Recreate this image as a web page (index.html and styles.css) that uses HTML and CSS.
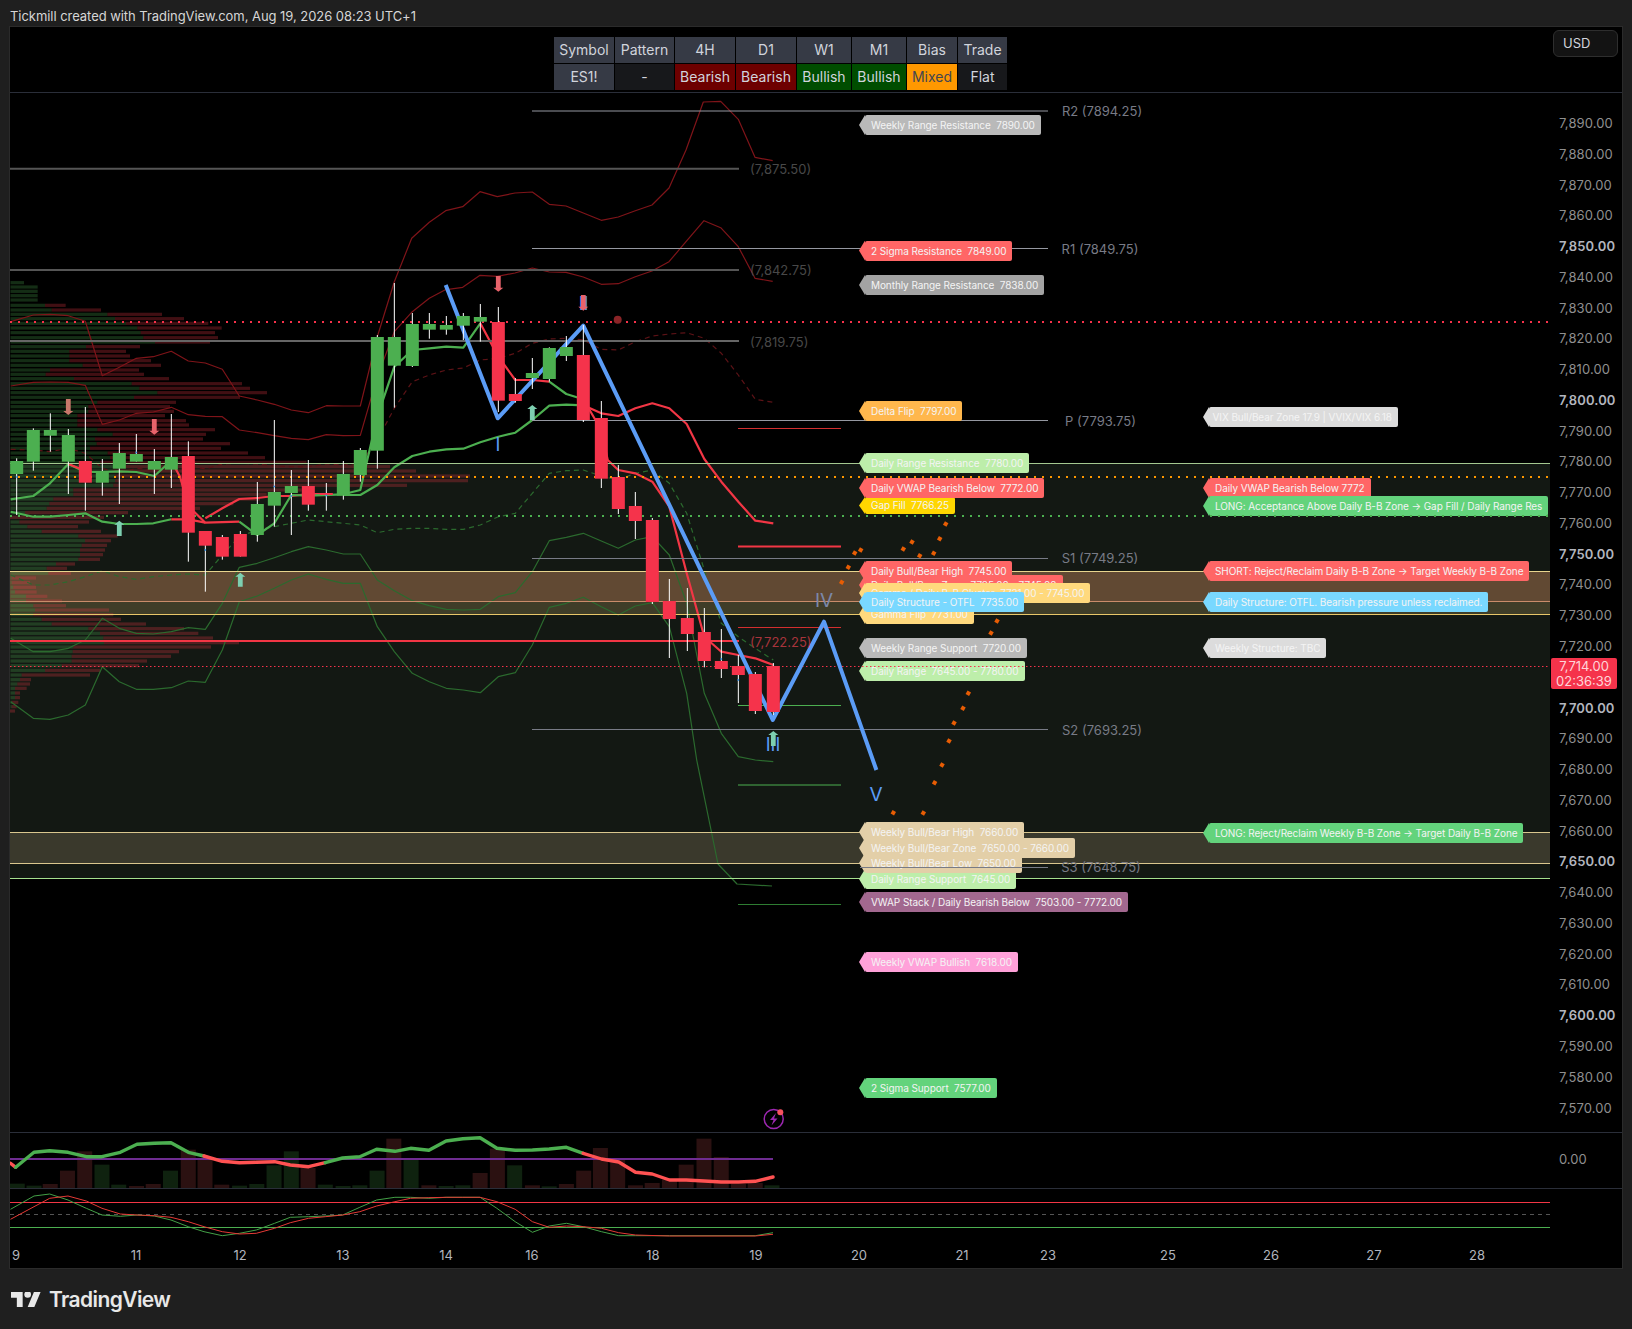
FILE: index.html
```html
<!DOCTYPE html>
<html lang="en">
<head>
    <meta charset="UTF-8">
    <title>ES1! chart</title>
    <link rel="stylesheet" href="styles.css">
</head>
<body>

    <header class="top_line">Tickmill created with TradingView.com, Aug 19, 2026 08:23 UTC+1</header>

    <main class="chart">
        <div class="table_pane">
            <div class="status_table">
                <div class="cell head">Symbol</div>
                <div class="cell head">Pattern</div>
                <div class="cell head">4H</div>
                <div class="cell head">D1</div>
                <div class="cell head">W1</div>
                <div class="cell head">M1</div>
                <div class="cell head">Bias</div>
                <div class="cell head">Trade</div>
                <div class="cell head">ES1!</div>
                <div class="cell flat">-</div>
                <div class="cell bear">Bearish</div>
                <div class="cell bear">Bearish</div>
                <div class="cell bull">Bullish</div>
                <div class="cell bull">Bullish</div>
                <div class="cell mixed">Mixed</div>
                <div class="cell flat">Flat</div>
            </div>
            <div class="currency">USD</div>
        </div>
        <div class="main_pane">
            <ul class="price_axis">
                <li>7,890.00</li><li>7,880.00</li><li>7,870.00</li><li>7,860.00</li>
                <li class="major">7,850.00</li><li>7,840.00</li><li>7,830.00</li><li>7,820.00</li>
                <li>7,810.00</li><li class="major">7,800.00</li><li>7,790.00</li><li>7,780.00</li>
                <li>7,770.00</li><li>7,760.00</li><li class="major">7,750.00</li><li>7,740.00</li>
                <li>7,730.00</li><li>7,720.00</li><li class="hidden">7,710.00</li><li class="major">7,700.00</li>
                <li>7,690.00</li><li>7,680.00</li><li>7,670.00</li><li>7,660.00</li>
                <li class="major">7,650.00</li><li>7,640.00</li><li>7,630.00</li><li>7,620.00</li>
                <li>7,610.00</li><li class="major">7,600.00</li><li>7,590.00</li><li>7,580.00</li>
                <li>7,570.00</li>
            </ul>
        </div>
        <div class="osc_pane"><span class="osc_zero">0.00</span></div>
        <div class="stoch_pane"></div>
        <div class="time_pane"></div>

        <svg class="plot" id="plot" viewBox="10 27 1612 1241">
            <g id="plot_under"></g>

            <text class="pivot_text" x="1102" y="111">R2 (7894.25)</text>
            <text class="pivot_text" x="1100" y="249">R1 (7849.75)</text>
            <text class="pivot_text" x="1100.5" y="421">P (7793.75)</text>
            <text class="pivot_text" x="1100" y="558">S1 (7749.25)</text>
            <text class="pivot_text" x="1102" y="730">S2 (7693.25)</text>

            <text class="level_text" x="750" y="169">(7,875.50)</text>
            <text class="level_text" x="750" y="270">(7,842.75)</text>
            <text class="level_text" x="750" y="342">(7,819.75)</text>
            <text class="level_text red" x="750" y="642">(7,722.25)</text>

            <text class="wave_text" x="498" y="444">I</text>
            <text class="wave_text" x="583.5" y="303">II</text>
            <text class="wave_text" x="773" y="744">III</text>
            <text class="wave_text dim big" x="824" y="600">IV</text>
            <text class="wave_text big" x="876" y="794">V</text>

            <text class="time_text" x="16" y="1255">9</text>
            <text class="time_text" x="136" y="1255">11</text>
            <text class="time_text" x="240" y="1255">12</text>
            <text class="time_text" x="343" y="1255">13</text>
            <text class="time_text" x="446" y="1255">14</text>
            <text class="time_text" x="532" y="1255">16</text>
            <text class="time_text" x="653" y="1255">18</text>
            <text class="time_text" x="756" y="1255">19</text>
            <text class="time_text" x="859" y="1255">20</text>
            <text class="time_text" x="962" y="1255">21</text>
            <text class="time_text" x="1048" y="1255">23</text>
            <text class="time_text" x="1168" y="1255">25</text>
            <text class="time_text" x="1271" y="1255">26</text>
            <text class="time_text" x="1374" y="1255">27</text>
            <text class="time_text" x="1477" y="1255">28</text>

            <circle class="bolt_ring" cx="773.7" cy="1119" r="9.5"></circle>
            <path class="bolt" d="M776 1113l-6 7h3.5l-2 5.5 6-7h-3.5z"></path>
            <circle class="bolt_dot" cx="780.3" cy="1112.3" r="3"></circle>
        </svg>

        <div class="tag mid grey" style="top:88px">Weekly Range Resistance&nbsp; 7890.00</div>
        <div class="tag mid red" style="top:213.5px">2 Sigma Resistance&nbsp; 7849.00</div>
        <div class="tag mid dark_grey" style="top:248px">Monthly Range Resistance&nbsp; 7838.00</div>
        <div class="tag mid orange" style="top:374px">Delta Flip&nbsp; 7797.00</div>
        <div class="tag mid light_green" style="top:426px">Daily Range Resistance&nbsp; 7780.00</div>
        <div class="tag mid yellow short" style="top:470px">Gap Fill&nbsp; 7766.25</div>
        <div class="tag mid red" style="top:451px">Daily VWAP Bearish Below&nbsp; 7772.00</div>
        <div class="tag mid red" style="top:548px">Daily Bull/Bear Zone&nbsp; 7735.00 - 7745.00</div>
        <div class="tag mid red" style="top:534px">Daily Bull/Bear High&nbsp; 7745.00</div>
        <div class="tag mid sand" style="top:577px">Gamma Flip&nbsp; 7731.00</div>
        <div class="tag mid sand" style="top:556px">Gamma / Daily B-B Cluster&nbsp; 7731.00 - 7745.00</div>
        <div class="tag mid sky" style="top:565px">Daily Structure - OTFL&nbsp; 7735.00</div>
        <div class="tag mid grey" style="top:611px">Weekly Range Support&nbsp; 7720.00</div>
        <div class="tag mid light_green" style="top:634px">Daily Range&nbsp; 7645.00 - 7780.00</div>
        <div class="tag mid light_green" style="top:842px">Daily Range Support&nbsp; 7645.00</div>
        <div class="tag mid beige" style="top:826px">Weekly Bull/Bear Low&nbsp; 7650.00</div>
        <div class="tag mid beige" style="top:795px">Weekly Bull/Bear High&nbsp; 7660.00</div>
        <div class="tag mid beige" style="top:811px">Weekly Bull/Bear Zone&nbsp; 7650.00 - 7660.00</div>
        <div class="tag mid plum" style="top:865px">VWAP Stack / Daily Bearish Below&nbsp; 7503.00 - 7772.00</div>
        <div class="tag mid pink" style="top:925px">Weekly VWAP Bullish&nbsp; 7618.00</div>
        <div class="tag mid green" style="top:1051px">2 Sigma Support&nbsp; 7577.00</div>

        <div class="tag side pale tight" style="top:380px">VIX Bull/Bear Zone 17.9 | VVIX/VIX 6.18</div>
        <div class="tag side red" style="top:451px">Daily VWAP Bearish Below 7772</div>
        <div class="tag side green" style="top:469px">LONG: Acceptance Above Daily B-B Zone → Gap Fill / Daily Range Res</div>
        <div class="tag side red" style="top:534px">SHORT: Reject/Reclaim Daily B-B Zone → Target Weekly B-B Zone</div>
        <div class="tag side sky" style="top:565px">Daily Structure: OTFL. Bearish pressure unless reclaimed.</div>
        <div class="tag side pale" style="top:611px">Weekly Structure: TBC</div>
        <div class="tag side green" style="top:796px">LONG: Reject/Reclaim Weekly B-B Zone → Target Daily B-B Zone</div>

        <svg class="plot" viewBox="10 27 1612 1241">
            <g id="plot_over"></g>
        </svg>

        <div class="last_price">7,714.00<br>02:36:39</div>
    </main>

    <footer class="brand">
        <svg class="brand_icon" viewBox="0 4 36 18">
            <path d="M14 22H7V11H0V4h14v18zM28 22h-8l7.5-18h8L28 22z"></path>
            <circle cx="20" cy="7" r="4"></circle>
        </svg>
        <span class="brand_name">TradingView</span>
    </footer>

    <script src="script.js"></script>
</body>
</html>
```

FILE: styles.css
```css
* {
    margin: 0;
    padding: 0;
    box-sizing: border-box;
}
body {
    width: 1632px;
    height: 1329px;
    overflow: hidden;
    background-color: #1f1f1f;
    font-family: Inter, "Noto Sans", sans-serif;
    color: #d1d4dc;
}
.top_line {
    height: 27px;
    padding: 8px 0 0 10px;
    font-size: 13px;
    line-height: 16px;
    letter-spacing: -0.05px;
    color: #d6d6d6;
}
.chart {
    position: relative;
    display: flex;
    flex-direction: column;
    width: 1612px;
    height: 1241px;
    margin-left: 10px;
    background-color: #000;
    outline: 1px solid #2b2b2b;
}
.table_pane {
    position: relative;
    height: 66px;
    padding: 10px 0 0 544px;
    border-bottom: 1px solid #2a2e39;
}
.status_table {
    display: grid;
    grid-template-columns: 60px 59px 60px 60px 54px 54px 50px 49px;
    grid-auto-rows: 26px;
    gap: 1px;
    width: max-content;
    font-size: 14px;
}
.cell {
    display: flex;
    align-items: center;
    justify-content: center;
    padding-bottom: 2px;
}
.head {
    background-color: #363a45;
}
.flat {
    background-color: #17181b;
}
.bear {
    background-color: #6d0000;
}
.bull {
    background-color: #004d00;
}
.mixed {
    background-color: #ff9800;
    color: #434651;
}
.currency {
    position: absolute;
    top: 3px;
    right: 4px;
    width: 65px;
    height: 27px;
    padding-left: 9px;
    border: 1px solid #2e2e2e;
    border-radius: 6px;
    background-color: #131313;
    font-size: 13px;
    line-height: 25px;
}
.main_pane {
    position: relative;
    flex: 1;
    border-bottom: 1px solid #2a2e39;
}
.price_axis {
    position: absolute;
    top: 15px;
    left: 1549px;
    list-style: none;
    font-size: 13px;
    color: #8f8f8f;
    letter-spacing: 0.1px;
}
.price_axis li {
    height: 30.78px;
    line-height: 30.78px;
}
.price_axis .major {
    font-weight: 600;
    color: #b2b5be;
}
.price_axis .hidden {
    visibility: hidden;
}
.osc_pane {
    position: relative;
    height: 56px;
    border-bottom: 1px solid #2a2e39;
}
.osc_zero {
    position: absolute;
    top: 18px;
    left: 1549px;
    font-size: 13px;
    color: #8f8f8f;
}
.stoch_pane {
    height: 51px;
}
.time_pane {
    height: 28px;
}

.plot {
    position: absolute;
    top: 0;
    left: 0;
    width: 1612px;
    height: 1241px;
    pointer-events: none;
}
.pivot_text,
.level_text {
    font-size: 13px;
    dominant-baseline: central;
}
.pivot_text {
    text-anchor: middle;
    fill: #787b86;
}
.level_text {
    fill: #484848;
}
.level_text.red {
    fill: #a8343c;
}
.wave_text {
    font-size: 18px;
    fill: #5b9cf6;
    text-anchor: middle;
    dominant-baseline: central;
}
.wave_text.big {
    font-size: 19px;
}
.wave_text.dim {
    fill: #7c88a8;
}
.time_text {
    font-size: 13px;
    fill: #b2b5be;
    text-anchor: middle;
    dominant-baseline: central;
}
.bolt_ring {
    fill: none;
    stroke: #9c27b0;
    stroke-width: 1.5;
}
.bolt {
    fill: #9c27b0;
}
.bolt_dot {
    fill: #f7525f;
}

.tag {
    position: absolute;
    height: 20px;
    padding: 0 6px;
    border-radius: 2px;
    font-size: 10px;
    line-height: 20px;
    letter-spacing: -0.08px;
    white-space: nowrap;
    color: #f4f4f4;
}
.tag::before {
    content: "";
    position: absolute;
    top: 0;
    left: -6px;
    width: 6px;
    height: 100%;
    background-color: inherit;
    clip-path: polygon(100% 0, 0 50%, 100% 100%);
}
.tag.short {
    height: 17px;
    line-height: 17px;
}
.tag.tight {
    padding-left: 3.5px;
}
.mid {
    left: 855px;
}
.side {
    left: 1199px;
}
.grey {
    background-color: #b9b9b9;
}
.dark_grey {
    background-color: #a3a3a3;
}
.pale {
    background-color: #dcdcdc;
}
.red {
    background-color: #ff6666;
}
.orange {
    background-color: #ffb74d;
}
.yellow {
    background-color: #ffd600;
}
.sand {
    background-color: #ffd97d;
}
.sky {
    background-color: #79d8ff;
}
.light_green {
    background-color: #bdeeaa;
}
.green {
    background-color: #63d37c;
}
.beige {
    background-color: #e3cfa8;
}
.plum {
    background-color: #a2688f;
}
.pink {
    background-color: #ffa1d9;
}
.last_price {
    position: absolute;
    top: 631px;
    left: 1541px;
    width: 66px;
    height: 31px;
    padding-top: 1px;
    border-radius: 2px;
    background-color: #f5334b;
    color: #ffd5d9;
    font-size: 13px;
    line-height: 14.5px;
    text-align: center;
}

.brand {
    display: flex;
    align-items: center;
    gap: 8px;
    height: 61px;
    padding: 2px 0 0 11px;
}
.brand_icon {
    width: 30px;
    height: 15px;
    fill: #e8e8e8;
}
.brand_name {
    font-size: 21px;
    font-weight: 600;
    letter-spacing: -0.6px;
    color: #e8e8e8;
}

/* chart parts drawn by script.js */
.line {
    fill: none;
    stroke-linejoin: round;
}
.thin_red { stroke: #7f1419; stroke-width: 1.2; }
.thin_green { stroke: #2b6a2e; stroke-width: 1.2; }
.dash_red { stroke: #5c1216; stroke-width: 1.2; stroke-dasharray: 5 4; }
.dash_green { stroke: #2b6a2e; stroke-width: 1.2; stroke-dasharray: 5 4; }
.fat_green { stroke: #4caf50; stroke-width: 2.2; }
.fat_red { stroke: #f23645; stroke-width: 2.2; }
.wave { stroke: #5b9cf6; stroke-width: 4; }
.macd_green { stroke: #4caf50; stroke-width: 3.4; stroke-linecap: round; }
.macd_red { stroke: #ff5252; stroke-width: 3.4; stroke-linecap: round; }
.stoch_green { stroke: #43a047; stroke-width: 1; }
.stoch_red { stroke: #e53935; stroke-width: 1; }
.wick { fill: #fff; }
.up { fill: #4caf50; }
.down { fill: #f5334b; }
.arrow_up { fill: #7dcfb0; }
.arrow_down { fill: #e8636b; }
.arrow_dim { fill: #c8776a; }
.tick { fill: #2f8fe8; }
.dot { fill: #e85d04; }
.circle_mark { fill: #8a2427; }
```

FILE: script.js
```js
// chart is drawn in page pixels, the viewBox of the svg maps them
const under = document.getElementById("plot_under");
const over = document.getElementById("plot_over");
let html = "";
let topHtml = "";

const z3 = (p) => p.map((q) => [q[0] / 3, 260 + q[1] / 3]);
const z4 = (p) => p.map((q) => [500 + q[0] / 3, 260 + q[1] / 3]);
const z11 = (p) => p.map((q) => [380 + q[0] / 3, 90 + q[1] / 3]);
const z8 = (p) => p.map((q) => [q[0] / 1.912, 1120 + q[1] / 3]);

function rect(x, y, w, h, fill, cls) {
    const c = cls ? ` class="${cls}"` : "";
    const f = fill ? ` fill="${fill}"` : "";
    return `<rect x="${x}" y="${y}" width="${w}" height="${h}"${f}${c}></rect>`;
}
function poly(points, cls) {
    const d = points.map((p) => p[0].toFixed(1) + "," + p[1].toFixed(1)).join(" ");
    return `<polyline class="line ${cls}" points="${d}"></polyline>`;
}
function hline(x1, x2, y, color, w, dash) {
    const da = dash ? ` stroke-dasharray="${dash}"` : "";
    return `<line x1="${x1}" x2="${x2}" y1="${y}" y2="${y}" stroke="${color}" stroke-width="${w}"${da}></line>`;
}

// zones
html += rect(10, 463, 1540, 416, "#131813");
html += rect(10, 571, 1540, 30.5, "#614933");
html += rect(10, 601.5, 1540, 12.5, "#3f3d28");
html += rect(10, 832.5, 1540, 31, "#3a392c");

// volume profile: zoomed y, green end, total end
const profile = [[68,72,72],[81,113,113],[94,113,113],[107,113,113],[120,113,113],[136,135,197],[150,155,303],[163,322,486],[176,345,552],[190,378,625],[204,412,665],[218,422,645],[233,430,654],[246,465,630],[260,258,420],[274,208,378],[288,208,390],[302,208,453],[316,248,483],[330,150,417],[343,137,432],[356,222,507],[371,395,726],[385,418,750],[398,472,801],[412,402,720],[427,292,528],[440,265,510],[454,265,522],[467,232,495],[482,232,558],[495,232,567],[509,292,645],[523,338,618],[537,285,609],[551,290,690],[565,270,663],[579,323,744],[593,330,795],[607,300,920],[620,340,1170],[633,340,1248],[648,345,1410],[662,345,1404],[676,340,1221],[690,220,905],[703,220,800],[717,160,780],[731,148,700],[745,140,600],[758,75,384],[772,30,312],[786,58,267],[800,82,234],[814,125,303],[828,235,353],[842,255,333],[856,245,321],[870,240,315],[884,240,309],[898,235,300],[912,168,225],[925,140,201],[940,145,213],[954,35,108],[968,35,90],[982,40,108],[996,45,110],[1009,78,142],[1023,78,186],[1037,100,198],[1050,105,327],[1064,100,340],[1078,125,363],[1092,155,438],[1106,265,552],[1120,300,595],[1134,310,639],[1148,312,717],[1161,220,633],[1175,218,537],[1189,215,513],[1203,215,441],[1217,185,417],[1231,135,300],[1245,65,270],[1259,60,93],[1272,52,90],[1285,45,80],[1299,45,60],[1313,45,60],[1327,35,55],[1340,35,50],[1353,30,45]];
for (const r of profile) {
    const y = 260 + r[0] / 3 - 1.6;
    const g = r[1] / 3 - 10.5;
    const t = r[2] / 3 - 10.5;
    html += rect(10.5, y, g, 3.2, "rgba(76,175,80,.26)");
    if (t > g) html += rect(10.5 + g, y, t - g, 3.2, "rgba(242,54,69,.27)");
}

// bands
const bandA = z3([[32,185],[100,165],[150,163],[205,167],[256,184],[307,347],[358,322],[409,295],[460,290],[514,274],[565,303],[616,309],[667,328],[718,408],[772,420],[823,433],[874,450],[925,458],[979,437],[1030,438],[1081,438],[1132,230],[1183,65]])
    .concat(z11([[95,445],[148,397],[197,362],[248,350],[300,305],[352,320],[405,309],[457,306],[508,343],[558,348],[610,369],[664,391],[715,381],[766,362],[816,345],[867,294],[918,180],[970,36],[1022,34],[1075,88],[1125,202],[1178,212]]));
const bandB = z3([[32,378],[100,367],[150,366],[205,367],[256,376],[307,493],[358,480],[409,460],[460,456],[514,442],[565,464],[616,469],[667,470],[718,510],[772,518],[823,527],[874,535],[925,539],[979,524],[1030,527],[1081,526],[1132,350],[1183,215],[1237,155],[1288,115],[1339,88]])
    .concat(z11([[205,598],[248,592],[300,556],[352,559],[405,549],[457,534],[508,546],[558,547],[610,561],[664,583],[715,581],[766,560],[816,543],[867,515],[918,455],[972,392],[1022,413],[1075,470],[1125,565],[1178,574]]));
const dashRed = z3([[32,568],[100,570],[150,575],[205,565],[256,580],[307,625],[358,640],[409,625],[460,630],[514,625],[565,617],[616,627],[667,612],[718,610],[772,612],[823,618],[874,620],[925,620],[979,612],[1030,615],[1081,610],[1132,540],[1183,445],[1237,365],[1288,345],[1339,330],[1390,324],[1441,300],[1495,295],[1546,280]])
    .concat(z4([[97,250],[148,237],[199,235],[250,240],[304,268],[355,270],[406,245],[457,228],[508,222],[560,218],[613,235],[664,280],[715,345],[766,418],[820,427]]));
const dashGreen = z3([[32,945],[100,975],[150,975],[205,965],[256,950],[307,932],[358,950],[409,958],[460,950],[514,945],[565,942],[616,945],[667,885],[718,830],[772,810],[823,800],[874,790],[925,780],[979,785],[1030,790],[1081,795],[1132,818],[1183,808],[1237,805],[1288,805],[1339,808],[1390,808],[1441,795],[1495,770],[1546,760]])
    .concat(z4([[97,700],[148,640],[199,632],[250,630],[304,648],[355,660],[406,640],[457,630],[508,670],[560,760],[613,930],[664,1090],[715,1130],[766,1165],[820,1200]]));
const green1 = z3([[32,1135],[100,1175],[150,1175],[205,1165],[256,1140],[307,1075],[358,1105],[409,1120],[460,1122],[514,1115],[565,1103],[616,1108],[667,1030],[718,922],[772,910],[823,893],[874,875],[925,860],[979,870],[1030,882],[1081,882],[1132,960],[1183,992],[1237,1022],[1288,1037],[1339,1048],[1390,1050],[1441,1048],[1495,1010],[1546,998]])
    .concat(z4([[97,935],[148,842],[199,832],[250,820],[304,843],[355,865],[406,840],[457,830],[508,885],[560,1030],[613,1300],[664,1420],[715,1490],[766,1500],[820,1505]]));
const green2 = z3([[32,1325],[100,1375],[150,1378],[205,1365],[256,1335],[307,1220],[358,1265],[409,1288],[460,1288],[514,1283],[565,1263],[616,1267],[667,1170],[718,1025],[772,1008],[823,985],[874,960],[925,942],[979,958],[1030,970],[1081,970],[1132,1100],[1183,1175],[1237,1240],[1288,1265],[1339,1285],[1390,1290],[1441,1298],[1495,1250],[1546,1238]])
    .concat(z4([[97,1155],[148,1042],[199,1030],[250,1012],[304,1040],[355,1065],[406,1038],[457,1028],[508,1100],[560,1300],[590,1500]]), [[718,864],[737,884],[772,886]]);
html += poly(bandA, "thin_red") + poly(bandB, "thin_red");
html += poly(dashRed, "dash_red") + poly(dashGreen, "dash_green");
html += poly(green1, "thin_green") + poly(green2, "thin_green");

// vwap lines
html += poly(z3([[32,718],[100,708],[150,670],[205,612],[256,636],[307,636],[358,634],[409,636],[463,648],[514,602]]), "fat_green");
html += poly(z3([[205,612],[256,632]]), "fat_red");
html += poly(z3([[514,602],[540,650],[565,738],[616,788],[718,785]]), "fat_red");
html += poly(z3([[616,775],[667,745],[718,717],[772,714],[823,708],[874,708],[925,702],[979,702]]), "fat_red");
html += poly(z3([[718,785],[772,825],[823,790],[874,705],[925,707],[1030,703],[1081,690],[1132,470],[1183,320],[1237,270],[1288,265],[1339,260],[1390,263],[1441,190]]), "fat_green");
html += poly(z3([[32,755],[100,770],[150,770],[205,765],[256,760],[307,785],[358,792],[409,792],[460,790],[514,778]]), "fat_green");
html += poly(z3([[514,778],[565,778],[616,788]]), "fat_red");
html += poly(z3([[1030,705],[1081,705],[1132,675],[1183,622],[1237,588],[1288,575],[1339,568],[1390,566],[1441,547],[1495,530],[1546,518]]).concat(z4([[97,480],[148,437],[199,434],[250,436]])), "fat_green");
html += poly(z4([[250,436],[304,460],[355,468],[406,445],[457,430],[508,445],[560,492],[613,597],[664,665],[715,725],[766,782],[820,790]]), "fat_red");
html += poly(z3([[1441,190],[1495,290],[1546,360]]).concat(z4([[97,360],[148,365]])), "fat_red");
html += poly(z4([[148,365],[199,402],[250,418]]), "fat_green");
html += poly(z4([[250,418],[304,510],[323,600],[355,630],[406,640],[457,665],[508,740],[560,940],[613,1130],[664,1175],[715,1185],[766,1195],[820,1215]]), "fat_red");

// level lines
html += hline(10, 739, 168.7, "#555", 2);
html += hline(10, 739, 270, "#555", 2);
html += hline(10, 739, 341, "#666", 2);
html += hline(10, 739, 641, "#f23645", 2);
html += hline(532, 1048, 111, "#9598a1", 1);
html += hline(532, 1048, 248.5, "#9598a1", 1);
html += hline(532, 1048, 420.5, "#9598a1", 1);
html += hline(532, 1048, 558.5, "#787b86", 1);
html += hline(532, 1048, 729.5, "#787b86", 1);
html += hline(738, 841, 428.5, "#d32f2f", 1);
html += hline(738, 841, 546.5, "#f23645", 2);
html += hline(738, 841, 627.5, "#d32f2f", 1);
html += hline(738, 841, 705.5, "#4caf50", 1);
html += hline(738, 841, 785, "#4caf50", 1);
html += hline(738, 841, 904.5, "#2e7d32", 1);
html += hline(10, 1550, 463.5, "#a5c890", 1);
html += hline(10, 1550, 571.5, "#e8d58e", 1);
html += hline(10, 1550, 601.5, "#c98c6a", 1);
html += hline(10, 1550, 614.5, "#e8c76a", 1);
html += hline(10, 1550, 832.5, "#d9c68e", 1);
html += hline(10, 1550, 863.5, "#d9c68e", 1);
html += hline(10, 1550, 878.5, "#a5e08f", 1);
html += hline(10, 1550, 322, "#f7324a", 2, "2 6");
html += hline(10, 858, 477, "#ff9800", 2, "2 6");
html += hline(10, 858, 516, "#4caf50", 2, "2 6");
html += hline(10, 858, 666.5, "#f5334b", 1, "1.5 2.5");

// wave
html += poly(z3([[1337,75],[1493,475]]).concat(z4([[250,197],[818,1380],[972,1085]]), [[876.4,770]]), "wave");

// candles: x, body top, body bottom, wick top, wick bottom (zoom px)
const candles3 = [[50,603,642,595,765,1],[100,510,605,505,632,1],[151,510,527,460,575,1],[205,525,605,507,702,1],[256,603,668,441,752,0],[307,633,668,597,707,1],[358,579,626,549,732,1],[409,582,605,522,605,1],[463,603,629,567,702,1],[514,591,629,462,684,1],[565,588,818,544,905,0],[616,813,857,813,995,0],[667,831,890,825,899,0],[721,822,890,813,890,0],[772,732,825,666,845,1],[823,696,737,480,800,1],[874,678,699,630,825,1],[925,678,734,600,752,0],[979,699,705,669,752,0],[1030,642,707,603,719,1],[1081,570,645,564,665,1],[1132,231,572,225,626,1],[1183,231,317,69,443,1],[1237,192,318,159,321,1],[1288,192,209,159,236,1],[1339,195,209,168,224,1],[1390,168,197,159,240,1],[1441,171,185,132,245,1],[1495,186,422,141,456,0]];
const candles4 = [[46,402,423,354,428,0],[97,339,354,294,387,1],[148,264,357,262,365,1],[199,261,288,228,303,1],[250,285,480,195,486,0],[304,474,656,423,684,0],[355,651,747,615,762,0],[406,738,783,696,837,0],[457,780,1026,774,1032,0],[508,1023,1077,957,1194,0],[562,1074,1122,984,1173,0],[613,1116,1203,1044,1222,0],[664,1203,1227,1107,1254,0],[715,1218,1245,1185,1329,0],[766,1242,1353,1236,1362,0],[820,1218,1356,1209,1365,0]];
function candle(x, c) {
    const y = (v) => 260 + v / 3;
    let s = rect(x - 0.5, y(c[3]), 1, (c[4] - c[3]) / 3, null, "wick");
    s += rect(x - 6.5, y(c[1]), 13, (c[2] - c[1]) / 3, null, c[5] ? "up" : "down");
    return s;
}
for (const c of candles3) html += candle(c[0] / 3, c);
for (const c of candles4) html += candle(500 + c[0] / 3, c);

// small blue ticks on wicks
for (const t of [[16.7,477],[136.3,452.5],[205.3,550],[274.3,486.5],[291.3,496],[326.3,495.5],[721.3,659],[738.3,680]]) {
    html += rect(t[0] - 0.8, t[1] - 0.8, 1.6, 1.6, null, "tick");
}

// orange forecast dots
const dots = [[945.7,524],[912,542],[939.7,538.7],[903.3,549],[919.7,555.7],[933.7,553.3],[860.7,550],[854.7,553],[848.3,567.3],[841.7,582.3],[991,633],[968.3,693.3],[963,708.3],[893.3,812.7],[923.3,813],[934.6,782.7],[942,765],[949,741],[954,723],[997,621]];
for (const d of dots) {
    html += `<rect class="dot" x="${d[0] - 2}" y="${d[1] - 2}" width="4" height="4" transform="rotate(30 ${d[0]} ${d[1]})"></rect>`;
}

// volume bars in the oscillator pane
const volume = [[33,13,1],[65,7,1],[96,12,0],[129,52,0],[162,110,0],[195,70,1],[227,10,1],[261,6,0],[293,12,0],[326,52,1],[360,115,0],[392,90,0],[424,10,0],[458,7,1],[491,12,1],[524,68,1],[557,110,1],[589,60,0],[622,10,1],[656,6,1],[688,8,1],[721,52,1],[753,148,0],[786,85,1],[820,8,0],[853,6,1],[885,8,1],[918,45,0],[951,118,0],[984,68,1],[1018,8,0],[1050,5,1],[1083,12,0],[1116,52,0],[1148,120,0],[1181,85,0],[1215,8,0],[1247,15,0],[1280,25,0],[1312,70,0],[1346,148,0],[1379,93,0],[1412,12,0],[1444,15,0],[1476,8,1]];
for (const v of volume) {
    const h = v[1] / 3;
    html += rect(v[0] / 1.912 - 7.5, 1188 - h, 15, h, v[2] ? "#0f220f" : "#2b1111");
}
html += hline(10, 773, 1159, "#6f2c91", 2);

// thick histogram line, changes colour with sign
const macd = [[20,130],[30,142],[65,97],[95,92],[130,97],[165,110],[195,110],[230,97],[262,73],[295,70],[327,68],[360,97],[390,108],[425,124],[458,128],[490,127],[525,125],[555,135],[590,140],[622,128],[655,114],[688,110],[720,88],[755,94],[785,85],[820,91],[853,63],[885,56],[918,53],[950,85],[985,91],[1018,90],[1050,87],[1083,82],[1115,100],[1150,117],[1183,126],[1215,157],[1247,162],[1280,180],[1312,180],[1346,183],[1379,186],[1412,186],[1444,184],[1478,171]];
html += poly(z8(macd.slice(0, 2)), "macd_red");
html += poly(z8(macd.slice(1, 13)), "macd_green");
html += poly(z8(macd.slice(12, 20)), "macd_red");
html += poly(z8(macd.slice(19, 35)), "macd_green");
html += poly(z8(macd.slice(34)), "macd_red");

// stochastic
html += hline(10, 1550, 1202.5, "#f23645", 1);
html += hline(10, 1550, 1214.5, "#555", 1, "4 4");
html += hline(10, 1550, 1227.5, "#4caf50", 1);
html += poly(z8([[20,268],[65,228],[95,222],[130,240],[165,265],[195,285],[230,289],[262,285],[295,288],[327,300],[360,320],[390,335],[425,347],[458,340],[490,330],[525,310],[555,292],[590,290],[622,288],[655,285],[688,262],[720,240],[755,232],[785,232],[820,235],[853,232],[885,232],[918,232],[950,265],[985,305],[1018,337],[1050,318],[1083,310],[1115,320],[1150,335],[1183,347],[1215,347],[1280,347],[1444,347],[1478,338]]), "stoch_green");
html += poly(z8([[20,298],[65,260],[95,235],[130,228],[165,243],[195,265],[230,282],[262,285],[295,287],[327,292],[360,305],[390,320],[425,335],[458,342],[490,340],[525,325],[555,308],[590,295],[622,290],[655,285],[688,275],[720,258],[755,245],[785,235],[820,233],[853,232],[885,232],[918,232],[950,245],[985,268],[1018,305],[1050,322],[1083,318],[1115,320],[1150,325],[1183,338],[1215,345],[1280,348],[1444,348],[1478,343]]), "stoch_red");

// arrows sit above the wave numbers
function arrow(x, y1, y2, cls, pointsUp) {
    const a = pointsUp ? y1 : y2;
    const b = pointsUp ? y1 + 4 : y2 - 4;
    const e = pointsUp ? y2 : y1;
    const d = `M${x} ${a}L${x + 5} ${b}H${x + 2.4}V${e}H${x - 2.4}V${b}H${x - 5}Z`;
    return `<path class="${cls}" d="${d}"></path>`;
}
topHtml += arrow(119.3, 520.7, 536, "arrow_up", true);
topHtml += arrow(240.3, 572.7, 586.7, "arrow_up", true);
topHtml += arrow(532.3, 405, 420, "arrow_up", true);
topHtml += arrow(773.3, 731, 746, "arrow_up", true);
topHtml += arrow(68.3, 399, 415, "arrow_dim", false);
topHtml += arrow(154.3, 419, 434.7, "arrow_down", false);
topHtml += arrow(498.3, 276, 291.7, "arrow_down", false);
topHtml += arrow(583.3, 295, 310.7, "arrow_down", false);
topHtml += `<circle class="circle_mark" cx="617.7" cy="319.7" r="4"></circle>`;

// these run across the tags, x starts keep the dots in step with the left part
topHtml += hline(858, 1550, 477, "#ff9800", 2, "2 6");
topHtml += hline(858, 1550, 516, "#4caf50", 2, "2 6");
topHtml += hline(858, 1550, 666.5, "#f5334b", 1, "1.5 2.5");
topHtml += hline(860, 1048, 867.5, "#787b86", 1);
topHtml += `<text class="pivot_text" x="1101" y="867">S3 (7648.75)</text>`;

under.innerHTML = html;
over.innerHTML = topHtml;
```
